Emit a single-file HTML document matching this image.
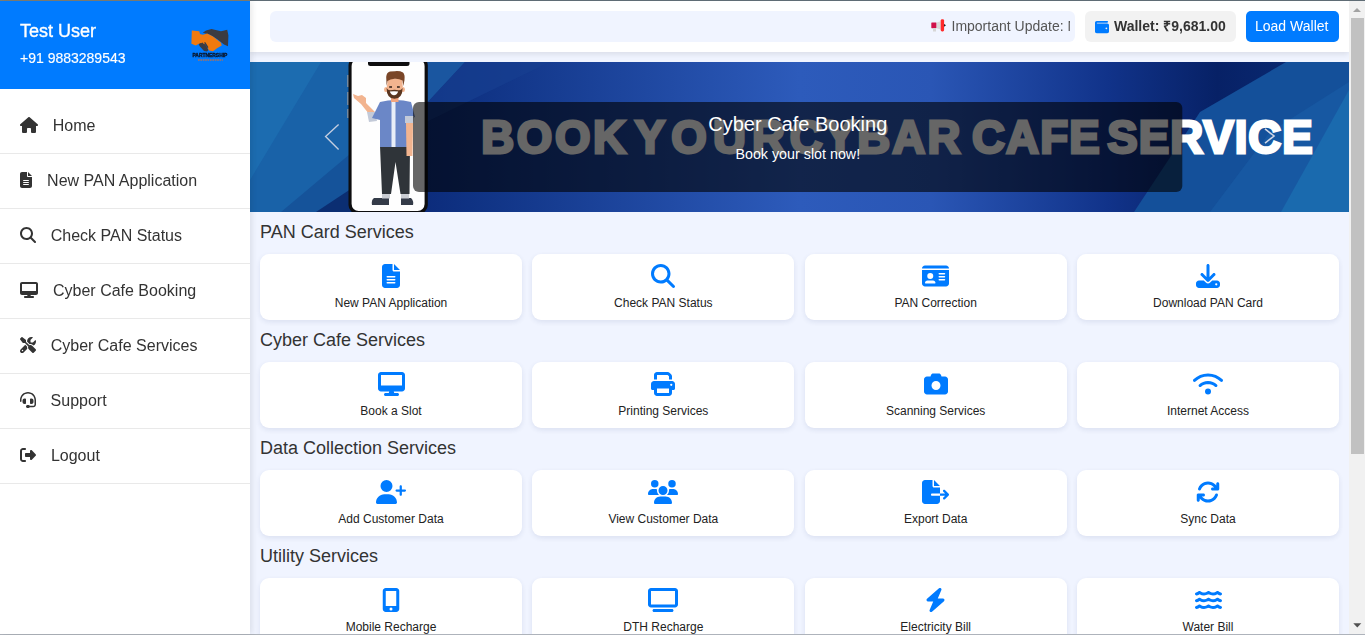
<!DOCTYPE html>
<html>
<head>
<meta charset="utf-8">
<style>
*{box-sizing:border-box;margin:0;padding:0}
html,body{width:1365px;height:635px;overflow:hidden}
body{position:relative;background:#f0f4ff;font-family:"Liberation Sans",sans-serif;color:#333}
.abs{position:absolute}
#topline{left:0;top:0;width:1365px;height:1px;background:#5f6c75}
#topline2{left:0;top:0;width:250px;height:1px;background:#7e7e74}
#botline{left:0;top:634px;width:1365px;height:1px;background:#aeb3bb}
#sidebar{left:0;top:1px;width:250px;height:633px;background:#fff;box-shadow:2px 0 6px rgba(0,0,0,0.09);z-index:5;will-change:transform}
#sbhead{left:0;top:0;width:250px;height:88px;background:#007bff;color:#fff}
#uname{left:20px;top:20px;font-size:18px;line-height:21px;white-space:nowrap;-webkit-text-stroke:0.35px #fff}
#uphone{left:20px;top:49px;font-size:14px;line-height:16px;white-space:nowrap;-webkit-text-stroke:0.15px #fff}
.mi{position:absolute;left:0;width:250px;height:55px;border-bottom:1px solid #e9e9e9}
.mi svg{position:absolute;left:20px;fill:#333}
.mi span{position:absolute;font-size:16px;line-height:18px;white-space:nowrap;color:#333}
#main{left:250px;top:1px;width:1099px;height:633px;overflow:hidden}
#hdr{left:0;top:0;width:1099px;height:51px;background:#fff;box-shadow:0 2px 6px rgba(0,0,0,0.1);z-index:3;will-change:transform}
#marq{left:20px;top:10px;width:805px;height:31px;background:#f0f4ff;border-radius:6px;overflow:hidden}
#wallet{left:835px;top:10px;width:151px;height:31px;background:#f2f2f2;border-radius:6px}
#loadbtn{left:996px;top:10px;width:93px;height:31px;background:#007bff;border-radius:5px;color:#fff;font-size:14px}
#banner{left:0;top:61px;width:1099px;height:150px;overflow:hidden}
.ttl{position:absolute;left:10px;margin-top:1px;font-size:18px;line-height:21px;color:#333;white-space:nowrap}
.card{position:absolute;width:262px;height:66px;background:#fff;border-radius:9px;box-shadow:0 2px 5px rgba(40,60,120,0.10)}
.card svg{position:absolute;top:10px;fill:#007bff}
.card span{position:absolute;left:0;width:262px;text-align:center;top:42px;font-size:12px;line-height:14px;color:#222;white-space:nowrap}
#sbar{left:1349px;top:1px;width:16px;height:633px;background:#f1f1f1}
#thumb{left:2px;top:17px;width:13px;height:436px;background:#c1c1c1}
</style>
</head>
<body>
<div id="sidebar" class="abs">
  <div id="sbhead" class="abs">
    <div id="uname" class="abs">Test User</div>
    <div id="uphone" class="abs">+91 9883289543</div>
    <svg class="abs" style="left:188px;top:23px" width="44" height="40" viewBox="188 23 44 40">
      <path d="M202.8 31.8 L206 29.4 L211.5 27.9 L221 30.2 L227.2 28.7 L228.4 34.2 L228 45.2 L224 43.6 L217 38.1 L210 33.8Z" fill="#3b3b42"/>
      <path d="M198.5 42.5 L201.5 41 L205 43 L208.5 49 L207 50.5 L204 50 L199.5 45Z" fill="#3b3b42"/>
      <path d="M191.8 29.4 L199.3 30.2 L200 33 L202.8 33.8 L207.2 32.6 L213 35.4 L221 41.7 L221.7 44.4 L217 47.2 L213 50.3 L209 49.5 L206 43.6 L200.5 42 L195.7 44.4 L191.4 42.8Z" fill="#f07a10"/>
      <path d="M201 42.2 L202.6 41.6 L206.3 47.6 L204.8 48.4Z M204 41.6 L205.4 41.2 L208.5 46.2 L207.2 47Z" fill="#3b3b42"/>
      <text x="209.9" y="55.8" text-anchor="middle" font-family="Liberation Sans" font-weight="bold" font-size="5.4" fill="#0a1426" stroke="#0a1426" stroke-width="0.35" textLength="35" lengthAdjust="spacingAndGlyphs">PARTNERSHIP</text>
      <line x1="198" y1="59" x2="222.8" y2="59" stroke="#e0702a" stroke-width="1.5" stroke-dasharray="1.6 0.8" stroke-opacity="0.8"/>
    </svg>
  </div>

  <div class="mi" style="top:98px"><svg style="top:18px" width="18" height="16" viewBox="0 0 576 512"><path d="M575.8 255.5c0 18-15 32.1-32 32.1h-32l.7 160.2c0 2.7-.2 5.4-.5 8.1V472c0 22.1-17.9 40-40 40H456c-1.1 0-2.2 0-3.3-.1c-1.4 .1-2.8 .1-4.2 .1H416 392c-22.1 0-40-17.9-40-40V448 384c0-17.7-14.3-32-32-32H256c-17.7 0-32 14.3-32 32v64 24c0 22.1-17.9 40-40 40H160 128.1c-1.5 0-3-.1-4.5-.2c-1.2 .1-2.4 .2-3.6 .2H104c-22.1 0-40-17.9-40-40V360c0-.9 0-1.9 .1-2.8V287.6H32c-18 0-32-14-32-32.1c0-9 3-17 10-24L266.4 8c7-7 15-8 22-8s15 2 21 7L564.8 231.5c8 7 12 15 11 24z"/></svg><span style="left:52.7px;top:18px">Home</span></div>
  <div class="mi" style="top:153px"><svg style="top:18px" width="12" height="16" viewBox="0 0 384 512"><path d="M64 0C28.7 0 0 28.7 0 64V448c0 35.3 28.7 64 64 64H320c35.3 0 64-28.7 64-64V160H256c-17.7 0-32-14.3-32-32V0H64zM256 0V128H384L256 0zM112 256H272c8.8 0 16 7.2 16 16s-7.2 16-16 16H112c-8.8 0-16-7.2-16-16s7.2-16 16-16zm0 64H272c8.8 0 16 7.2 16 16s-7.2 16-16 16H112c-8.8 0-16-7.2-16-16s7.2-16 16-16zm0 64H272c8.8 0 16 7.2 16 16s-7.2 16-16 16H112c-8.8 0-16-7.2-16-16s7.2-16 16-16z"/></svg><span style="left:47.1px;top:18px">New PAN Application</span></div>
  <div class="mi" style="top:208px"><svg style="top:18px" width="16" height="16" viewBox="0 0 512 512"><path d="M416 208c0 45.9-14.9 88.3-40 122.7L502.6 457.4c12.5 12.5 12.5 32.8 0 45.3s-32.8 12.5-45.3 0L330.7 376c-34.4 25.2-76.8 40-122.7 40C93.1 416 0 322.9 0 208S93.1 0 208 0S416 93.1 416 208zM208 352a144 144 0 1 0 0-288 144 144 0 1 0 0 288z"/></svg><span style="left:50.7px;top:18px">Check PAN Status</span></div>
  <div class="mi" style="top:263px"><svg style="top:18px" width="18" height="16" viewBox="0 0 576 512"><path d="M64 0C28.7 0 0 28.7 0 64V352c0 35.3 28.7 64 64 64H240l-10.7 32H160c-17.7 0-32 14.3-32 32s14.3 32 32 32H416c17.7 0 32-14.3 32-32s-14.3-32-32-32H346.7L336 416H512c35.3 0 64-28.7 64-64V64c0-35.3-28.7-64-64-64H64zM512 64V288H64V64H512z"/></svg><span style="left:53px;top:18px">Cyber Cafe Booking</span></div>
  <div class="mi" style="top:318px"><svg style="top:18px" width="16" height="16" viewBox="0 0 512 512"><path d="M78.6 5C69.1-2.4 55.6-1.5 47 7L7 47c-8.5 8.5-9.4 22-2.1 31.6l80 104c4.5 5.9 11.6 9.4 19 9.4h54.1l109 109c-14.700 29-10 65.4 14.3 89.6l112 112c12.5 12.5 32.8 12.5 45.3 0l64-64c12.5-12.5 12.5-32.8 0-45.3l-112-112c-24.2-24.2-60.6-29-89.6-14.3l-109-109V104c0-7.5-3.5-14.5-9.4-19L78.6 5zM19.9 396.1C7.2 408.8 0 426.1 0 444.1C0 481.6 30.4 512 67.9 512c18 0 35.3-7.2 48-19.9L233.7 374.3c-7.8-20.9-9-43.6-3.6-65.1l-61.7-61.7L19.9 396.1zM512 144c0-10.5-1.1-20.7-3.1-30.5c-2.4-11.2-16.1-14.1-24.2-6l-63.9 63.9c-3 3-7.1 4.7-11.3 4.7H352c-8.8 0-16-7.2-16-16V102.6c0-4.2 1.7-8.3 4.7-11.3l63.9-63.9c8.1-8.1 5.2-21.8-6-24.2C388.7 1.1 378.5 0 368 0C288.5 0 224 64.5 224 144l0 .8 85.3 85.3c36-9.1 75.8 .5 104 28.7L429 274.5c49-23 83-72.8 83-130.5zM56 432a24 24 0 1 1 48 0 24 24 0 1 1 -48 0z"/></svg><span style="left:50.7px;top:18px">Cyber Cafe Services</span></div>
  <div class="mi" style="top:373px"><svg style="top:18px" width="16" height="16" viewBox="0 0 512 512"><path d="M256 48C141.1 48 48 141.1 48 256v40c0 13.3-10.7 24-24 24s-24-10.7-24-24V256C0 114.6 114.6 0 256 0S512 114.6 512 256V400.1c0 48.6-39.4 88-88.1 88L313.6 488c-8.3 14.3-23.8 24-41.6 24H240c-26.5 0-48-21.5-48-48s21.5-48 48-48h32c17.8 0 33.3 9.7 41.6 24l110.4 .1c22.1 0 40-17.900 40-40V256c0-114.9-93.1-208-208-208zM144 208h16c17.7 0 32 14.3 32 32V352c0 17.7-14.3 32-32 32H144c-35.3 0-64-28.7-64-64V272c0-35.3 28.7-64 64-64zm224 0c35.3 0 64 28.7 64 64v48c0 35.3-28.7 64-64 64H352c-17.7 0-32-14.3-32-32V240c0-17.7 14.3-32 32-32h16z"/></svg><span style="left:50.6px;top:18px">Support</span></div>
  <div class="mi" style="top:428px"><svg style="top:18px" width="16" height="16" viewBox="0 0 512 512"><path d="M377.9 105.9L500.7 228.7c7.2 7.2 11.3 17.1 11.3 27.3s-4.1 20.1-11.3 27.3L377.9 406.1c-6.4 6.4-15 9.9-24 9.9c-18.7 0-33.9-15.2-33.9-33.9l0-62.1-128 0c-17.7 0-32-14.3-32-32l0-64c0-17.7 14.3-32 32-32l128 0 0-62.1c0-18.7 15.2-33.9 33.9-33.9c9 0 17.6 3.6 24 9.9zM160 96L96 96c-17.7 0-32 14.3-32 32l0 256c0 17.7 14.3 32 32 32l64 0c17.7 0 32 14.3 32 32s-14.3 32-32 32l-64 0c-53 0-96-43-96-96L0 128C0 75 43 32 96 32l64 0c17.7 0 32 14.3 32 32s-14.3 32-32 32z"/></svg><span style="left:50.9px;top:18px">Logout</span></div>
</div>
<div id="main" class="abs">
  <div id="hdr" class="abs">
    <div id="marq" class="abs"><div class="abs" style="left:0;top:0;width:800px;height:31px;overflow:hidden">
      <svg class="abs" style="left:660.1px;top:8.1px" width="16" height="14" viewBox="0 0 16 14"><rect x="1.3" y="3.4" width="5.3" height="5.8" rx="0.6" fill="#d0104a"/><rect x="3" y="9" width="3" height="3.5" fill="#d6d6d6"/><polygon points="6.6,3.6 10.7,2.2 10.7,10.6 6.6,9.2" fill="#d9d9d9"/><rect x="10.7" y="0.2" width="3.4" height="12.3" rx="1.4" fill="#ff2a2a"/><polygon points="14,5 16,6.3 14,7.8" fill="#222"/></svg>
      <div class="abs" style="left:681.5px;top:7px;font-size:14px;line-height:16px;color:#555;white-space:nowrap">Important Update: New PAN services are now available</div>
    </div></div>
    <div id="wallet" class="abs">
      <svg class="abs" style="left:10px;top:8.8px" width="14" height="14" viewBox="0 0 512 512"><path fill="#007bff" d="M64 32C28.7 32 0 60.7 0 96V416c0 35.3 28.7 64 64 64H448c35.3 0 64-28.7 64-64V192c0-35.3-28.7-64-64-64H80c-8.8 0-16-7.2-16-16s7.2-16 16-16H448c17.7 0 32-14.3 32-32s-14.3-32-32-32H64zM416 272a32 32 0 1 1 0 64 32 32 0 1 1 0-64z"/></svg>
      <div class="abs" style="left:29px;top:7px;font-size:14px;line-height:16px;font-weight:bold;color:#333;white-space:nowrap">Wallet: ₹9,681.00</div>
    </div>
    <div id="loadbtn" class="abs"><div class="abs" style="left:9px;top:7px;line-height:16px;white-space:nowrap">Load Wallet</div></div>
  </div>
  <div id="banner" class="abs"><svg width="1099" height="150" viewBox="0 0 1099 150" style="display:block">
    <defs>
      <linearGradient id="bg" x1="0" y1="0" x2="1" y2="0">
        <stop offset="0" stop-color="#1b6aad"/>
        <stop offset="0.16" stop-color="#0c2c7c"/>
        <stop offset="0.2" stop-color="#0f3283"/>
        <stop offset="0.5" stop-color="#2d5bbb"/>
        <stop offset="0.62" stop-color="#2a56b5"/>
        <stop offset="0.78" stop-color="#11338a"/>
        <stop offset="0.88" stop-color="#072166"/>
        <stop offset="1" stop-color="#0b2e78"/>
      </linearGradient>
    </defs>
    <rect width="1099" height="150" fill="url(#bg)"/>
    <polygon points="0,0 120,0 100,150 0,150" fill="#1c6cb0"/>
    <polygon points="0,118 71,0 130,0 110,150 0,150" fill="#1962a8"/>
    <polygon points="31,150 100,92 150,60 150,150" fill="#15539a"/>
    <polygon points="66,150 100,127.6 150,100 150,150" fill="#0b2e72"/>
    <polygon points="170,0 215,0 176,42 170,50" fill="#1a56a0"/><polygon points="215,0 300,0 176,60 176,42" fill="#173f90" fill-opacity="0.7"/>
    <polygon points="884,150 950,50 1036,0 1099,0 1099,150" fill="#14509a"/>
    <polygon points="960,150 1020,70 1099,20 1099,150" fill="#1758a2"/>
    <polygon points="1031,150 1099,28 1099,150" fill="#1a6aae"/>
    <!-- phone -->
    <rect x="97.2" y="13" width="1.6" height="12" fill="#8a939e"/>
    <rect x="97.2" y="30" width="1.6" height="13" fill="#8a939e"/>
    <rect x="97.2" y="47" width="1.6" height="9" fill="#8a939e"/>
    <rect x="98.5" y="-5.5" width="79.3" height="157.5" rx="9" fill="#0d0d0f"/>
    <rect x="101.6" y="-3" width="73" height="152" rx="7" fill="#fefefe"/>
    <rect x="118" y="-2" width="41.5" height="6" rx="2.5" fill="#0d0d0f"/>
    <!-- man -->
    <g>
      <path d="M124 136 L139 136 L139 143 L122 143 Q121 138 124 136Z" fill="#343b48"/>
      <path d="M151 136 L161 136 Q164 139 163 143 L151 143Z" fill="#343b48"/>
      <rect x="132" y="130.5" width="8" height="6" fill="#c9ccd2"/>
      <rect x="151" y="130.5" width="8" height="6" fill="#c9ccd2"/>
      <path d="M130 84 L160 84 L159.5 132 L150.5 132 L145.5 100 L141 132 L132 132Z" fill="#2f3439"/>
      <path d="M119 52 L111 42 L104 36 L103 32 L108 34 L112 33 L116 36 L116 41 L125 50Z" fill="#f2b48f"/>
      <path d="M117 50 L125 50 L127 59 L119 60Z" fill="#c3cad8"/>
      <path d="M130 40 Q146 36 161 40 L165 55 L160 57 L160 85 L130 85 L130 58 L122 56Z" fill="#6b87c7"/>
      <rect x="141.5" y="38" width="4" height="47" fill="#e9eef7"/>
      <path d="M155 54 L164 54 L163 61 L155 61Z" fill="#c3cad8"/>
      <path d="M156 61 L163 61 L162.5 94 L156.5 94Z" fill="#f2b48f"/>
      <rect x="141" y="33" width="7.5" height="7" fill="#f2a57f"/>
      <ellipse cx="136" cy="27.5" rx="2" ry="2.6" fill="#f2b48f"/>
      <ellipse cx="153" cy="27.5" rx="2" ry="2.6" fill="#f2b48f"/>
      <ellipse cx="144.5" cy="26.5" rx="8" ry="9.3" fill="#f2b48f"/>
      <path d="M136.6 26 Q136.5 36.6 144.5 36.8 Q152.5 36.6 152.6 26 Q151 28.5 148.5 28.2 Q144.5 27.3 140.5 28.2 Q138 28.5 136.6 26Z" fill="#5a3620"/>
      <path d="M139.8 29.6 Q144.3 28.8 148.2 29.6 Q147 33.3 144 33.3 Q141 33.2 139.8 29.6Z" fill="#fff"/>
      <path d="M137.2 25 L137.6 16.5 L152.2 16.5 L152.8 25Z" fill="#f2b48f"/>
      <path d="M136.6 24 L136.2 15 Q136.5 10.5 140 9.6 L145 9.2 Q150 8.8 153 10.5 Q155.2 12.5 154.5 18 L153.3 24 L152.5 18.5 Q149 16.5 144.5 16.8 Q140 17 137.5 19Z" fill="#7a4628"/>
      <rect x="139.2" y="24.2" width="2.8" height="1.6" fill="#3a2a22"/>
      <rect x="147" y="24.2" width="2.8" height="1.6" fill="#3a2a22"/>
    </g>
    <text x="231.2" y="90.5" font-family="Liberation Sans" font-weight="bold" font-size="45.6" fill="#fff" stroke="#fff" stroke-width="2.8" stroke-linejoin="miter" textLength="144.78" lengthAdjust="spacing">BOOK</text>
    <text x="384.8" y="90.5" font-family="Liberation Sans" font-weight="bold" font-size="45.6" fill="#fff" stroke="#fff" stroke-width="2.8" stroke-linejoin="miter" textLength="150.13" lengthAdjust="spacing">YOUR</text>
    <text x="539.7" y="90.5" font-family="Liberation Sans" font-weight="bold" font-size="45.6" fill="#fff" stroke="#fff" stroke-width="2.8" stroke-linejoin="miter" textLength="170.62" lengthAdjust="spacing">CYBAR</text>
    <text x="721.9" y="90.5" font-family="Liberation Sans" font-weight="bold" font-size="45.6" fill="#fff" stroke="#fff" stroke-width="2.8" stroke-linejoin="miter" textLength="127.86" lengthAdjust="spacing">CAFE</text>
    <text x="857.3" y="90.5" font-family="Liberation Sans" font-weight="bold" font-size="45.6" fill="#fff" stroke="#fff" stroke-width="2.8" stroke-linejoin="miter" textLength="205.41" lengthAdjust="spacing">SERVICE</text>
    <rect x="163" y="40" width="769.3" height="90" rx="6" fill="#000" fill-opacity="0.6"/>
    <text x="547.8" y="68.6" text-anchor="middle" font-family="Liberation Sans" font-size="20" fill="#fff">Cyber Cafe Booking</text>
    <text x="547.8" y="96.5" text-anchor="middle" font-family="Liberation Sans" font-size="14.3" fill="#fff">Book your slot now!</text>
    <polyline points="88.6,62.6 75.6,74.4 88.6,87.4" fill="none" stroke="#c3cde0" stroke-width="1.4"/>
    <polyline points="1015,66.8 1024,74 1015,81.2" fill="none" stroke="#cfd6e6" stroke-width="1.6"/>
  </svg></div>
  <div class="ttl" style="top:220px">PAN Card Services</div>
  <div class="card" style="left:10px;top:253px"><svg style="left:122.00px" width="18.00" height="24" viewBox="0 0 384 512"><path d="M64 0C28.7 0 0 28.7 0 64V448c0 35.3 28.7 64 64 64H320c35.3 0 64-28.7 64-64V160H256c-17.7 0-32-14.3-32-32V0H64zM256 0V128H384L256 0zM112 256H272c8.8 0 16 7.2 16 16s-7.2 16-16 16H112c-8.8 0-16-7.2-16-16s7.2-16 16-16zm0 64H272c8.8 0 16 7.2 16 16s-7.2 16-16 16H112c-8.8 0-16-7.2-16-16s7.2-16 16-16zm0 64H272c8.8 0 16 7.2 16 16s-7.2 16-16 16H112c-8.8 0-16-7.2-16-16s7.2-16 16-16z"/></svg><span>New PAN Application</span></div>
  <div class="card" style="left:282.33px;top:253px"><svg style="left:119.00px" width="24.00" height="24" viewBox="0 0 512 512"><path d="M416 208c0 45.9-14.9 88.3-40 122.7L502.6 457.4c12.5 12.5 12.5 32.8 0 45.3s-32.8 12.5-45.3 0L330.7 376c-34.4 25.2-76.8 40-122.7 40C93.1 416 0 322.9 0 208S93.1 0 208 0S416 93.1 416 208zM208 352a144 144 0 1 0 0-288 144 144 0 1 0 0 288z"/></svg><span>Check PAN Status</span></div>
  <div class="card" style="left:554.67px;top:253px"><svg style="left:117.50px" width="27.00" height="24" viewBox="0 0 576 512"><path d="M0 96l576 0c0-35.3-28.7-64-64-64H64C28.7 32 0 60.7 0 96zm0 32V416c0 35.3 28.7 64 64 64H512c35.3 0 64-28.7 64-64V128H0zM64 405.3c0-29.5 23.9-53.3 53.3-53.3H234.7c29.5 0 53.3 23.9 53.3 53.3c0 5.9-4.8 10.7-10.7 10.7H74.7c-5.9 0-10.7-4.8-10.7-10.7zM176 192a64 64 0 1 1 0 128 64 64 0 1 1 0-128zm176 16c0-8.8 7.2-16 16-16H480c8.8 0 16 7.2 16 16s-7.2 16-16 16H368c-8.8 0-16-7.2-16-16zm0 64c0-8.8 7.2-16 16-16H480c8.8 0 16 7.2 16 16s-7.2 16-16 16H368c-8.8 0-16-7.2-16-16zm0 64c0-8.8 7.2-16 16-16H480c8.8 0 16 7.2 16 16s-7.2 16-16 16H368c-8.8 0-16-7.2-16-16z"/></svg><span>PAN Correction</span></div>
  <div class="card" style="left:827px;top:253px"><svg style="left:119.00px" width="24.00" height="24" viewBox="0 0 512 512"><path d="M288 32c0-17.7-14.3-32-32-32s-32 14.3-32 32V274.7l-73.4-73.4c-12.5-12.5-32.8-12.5-45.3 0s-12.5 32.8 0 45.3l128 128c12.5 12.5 32.8 12.5 45.3 0l128-128c12.5-12.5 12.5-32.8 0-45.3s-32.8-12.5-45.3 0L288 274.7V32zM64 352c-35.3 0-64 28.7-64 64v32c0 35.3 28.7 64 64 64H448c35.3 0 64-28.7 64-64V416c0-35.3-28.7-64-64-64H346.5l-45.3 45.3c-25 25-65.5 25-90.5 0L165.5 352H64zm368 56a24 24 0 1 1 0 48 24 24 0 1 1 0-48z"/></svg><span>Download PAN Card</span></div>
  <div class="ttl" style="top:328px">Cyber Cafe Services</div>
  <div class="card" style="left:10px;top:361px"><svg style="left:117.50px" width="27.00" height="24" viewBox="0 0 576 512"><path d="M64 0C28.7 0 0 28.7 0 64V352c0 35.3 28.7 64 64 64H240l-10.7 32H160c-17.7 0-32 14.3-32 32s14.3 32 32 32H416c17.7 0 32-14.3 32-32s-14.3-32-32-32H346.7L336 416H512c35.3 0 64-28.7 64-64V64c0-35.3-28.7-64-64-64H64zM512 64V288H64V64H512z"/></svg><span>Book a Slot</span></div>
  <div class="card" style="left:282.33px;top:361px"><svg style="left:119.00px" width="24.00" height="24" viewBox="0 0 512 512"><path d="M128 0C92.7 0 64 28.7 64 64v96h64V64H354.7L384 93.3V160h64V93.3c0-17-6.7-33.3-18.7-45.3L400 18.7C388 6.7 371.7 0 354.7 0H128zM384 352v32 64H128V384 368 352H384zm64 32h32c17.7 0 32-14.3 32-32V256c0-35.3-28.7-64-64-64H64c-35.3 0-64 28.7-64 64v96c0 17.7 14.3 32 32 32H64v64c0 35.3 28.7 64 64 64H384c35.3 0 64-28.7 64-64V384zM432 248a24 24 0 1 1 0 48 24 24 0 1 1 0-48z"/></svg><span>Printing Services</span></div>
  <div class="card" style="left:554.67px;top:361px"><svg style="left:119.00px" width="24.00" height="24" viewBox="0 0 512 512"><path d="M149.1 64.8L138.7 96H64C28.7 96 0 124.7 0 160V416c0 35.3 28.7 64 64 64H448c35.3 0 64-28.7 64-64V160c0-35.3-28.7-64-64-64H373.3L362.9 64.8C356.4 45.2 338.1 32 317.4 32H194.6c-20.7 0-39 13.2-45.5 32.8zM256 192a96 96 0 1 1 0 192 96 96 0 1 1 0-192z"/></svg><span>Scanning Services</span></div>
  <div class="card" style="left:827px;top:361px"><svg style="left:116.00px" width="30.00" height="24" viewBox="0 0 640 512"><path d="M54.2 202.9C123.2 136.7 216.8 96 320 96s196.8 40.7 265.8 106.9c12.8 12.2 33 11.8 45.2-.9s11.8-33-.9-45.2C549.7 79.5 440.4 32 320 32S90.3 79.5 9.8 156.7C-2.9 169-3.3 189.2 8.9 202s32.5 13.2 45.2 .9zM320 256c56.8 0 108.6 21.1 148.2 56c13.3 11.7 33.5 10.4 45.2-2.8s10.4-33.5-2.8-45.2C459.8 219.2 393 192 320 192s-139.8 27.2-190.5 72c-13.3 11.7-14.5 31.9-2.8 45.2s31.9 14.5 45.2 2.8c39.5-34.9 91.3-56 148.2-56zm64 160a64 64 0 1 0 -128 0 64 64 0 1 0 128 0z"/></svg><span>Internet Access</span></div>
  <div class="ttl" style="top:436px">Data Collection Services</div>
  <div class="card" style="left:10px;top:469px"><svg style="left:116.00px" width="30.00" height="24" viewBox="0 0 640 512"><path d="M96 128a128 128 0 1 1 256 0A128 128 0 1 1 96 128zM0 482.3C0 383.8 79.8 304 178.3 304h91.4C368.2 304 448 383.8 448 482.3c0 16.4-13.3 29.7-29.7 29.7H29.7C13.3 512 0 498.7 0 482.3zM504 312V248H440c-13.3 0-24-10.7-24-24s10.7-24 24-24h64V136c0-13.3 10.7-24 24-24s24 10.7 24 24v64h64c13.3 0 24 10.7 24 24s-10.7 24-24 24H552v64c0 13.3-10.7 24-24 24s-24-10.7-24-24z"/></svg><span>Add Customer Data</span></div>
  <div class="card" style="left:282.33px;top:469px"><svg style="left:116.00px" width="30.00" height="24" viewBox="0 0 640 512"><path d="M144 0a80 80 0 1 1 0 160A80 80 0 1 1 144 0zM512 0a80 80 0 1 1 0 160A80 80 0 1 1 512 0zM0 298.7C0 239.8 47.8 192 106.7 192h42.7c15.9 0 31 3.5 44.6 9.7c-1.3 7.2-1.9 14.7-1.900 22.3c0 38.2 16.8 72.5 43.3 96c-.2 0-.4 0-.7 0H21.3C9.6 320 0 310.4 0 298.7zM405.3 320c-.2 0-.4 0-.7 0c26.6-23.5 43.3-57.8 43.3-96c0-7.6-.7-15-1.9-22.3c13.6-6.3 28.7-9.7 44.6-9.7h42.7C592.2 192 640 239.8 640 298.7c0 11.8-9.6 21.3-21.3 21.3H405.3zM224 224a96 96 0 1 1 192 0 96 96 0 1 1 -192 0zM128 485.3C128 411.7 187.7 352 261.3 352H378.7C452.3 352 512 411.7 512 485.3c0 14.7-11.9 26.7-26.7 26.7H154.7c-14.7 0-26.7-11.9-26.7-26.7z"/></svg><span>View Customer Data</span></div>
  <div class="card" style="left:554.67px;top:469px"><svg style="left:117.50px" width="27.00" height="24" viewBox="0 0 576 512"><path d="M0 64C0 28.7 28.7 0 64 0H224V128c0 17.7 14.3 32 32 32H384V288H216c-13.3 0-24 10.7-24 24s10.7 24 24 24H384V448c0 35.3-28.7 64-64 64H64c-35.3 0-64-28.700-64-64V64zM384 336V288H494.1l-39-39c-9.4-9.4-9.4-24.6 0-33.9s24.6-9.4 33.9 0l80 80c9.4 9.4 9.4 24.6 0 33.9l-80 80c-9.4 9.4-24.6 9.4-33.9 0s-9.4-24.6 0-33.9l39-39H384zm0-208H256V0L384 128z"/></svg><span>Export Data</span></div>
  <div class="card" style="left:827px;top:469px"><svg style="left:119.00px" width="24.00" height="24" viewBox="0 0 512 512"><path d="M105.1 202.6c7.7-21.8 20.2-42.3 37.8-59.8c62.5-62.5 163.8-62.5 226.3 0L386.3 160H352c-17.7 0-32 14.3-32 32s14.3 32 32 32H463.5c0 0 0 0 0 0h.4c17.7 0 32-14.3 32-32V80c0-17.7-14.3-32-32-32s-32 14.3-32 32v35.2L414.4 97.6c-87.5-87.5-229.3-87.5-316.8 0C73.2 122 55.6 150.7 44.8 181.4c-5.9 16.7 2.9 34.9 19.5 40.8s34.9-2.9 40.8-19.5zM39 289.3c-5 1.5-9.8 4.2-13.7 8.2c-4 4-6.7 8.8-8.1 14c-.3 1.2-.6 2.5-.8 3.8c-.3 1.7-.4 3.4-.4 5.1V432c0 17.7 14.3 32 32 32s32-14.3 32-32V396.9l17.6 17.5 0 0c87.5 87.4 229.3 87.4 316.7 0c24.4-24.4 42.1-53.1 52.9-83.700c5.9-16.7-2.9-34.9-19.5-40.8s-34.9 2.9-40.8 19.5c-7.7 21.8-20.2 42.3-37.8 59.8c-62.5 62.5-163.8 62.5-226.3 0l-.1-.1L125.6 352H160c17.7 0 32-14.3 32-32s-14.3-32-32-32H48.4c-1.6 0-3.2 .1-4.8 .3s-3.1 .5-4.600 1z"/></svg><span>Sync Data</span></div>
  <div class="ttl" style="top:544px">Utility Services</div>
  <div class="card" style="left:10px;top:577px"><svg style="left:122.00px" width="18.00" height="24" viewBox="0 0 384 512"><path d="M16 64C16 28.7 44.7 0 80 0H304c35.3 0 64 28.7 64 64V448c0 35.3-28.7 64-64 64H80c-35.3 0-64-28.7-64-64V64zM224 448a32 32 0 1 0 -64 0 32 32 0 1 0 64 0zM304 64H80V384H304V64z"/></svg><span>Mobile Recharge</span></div>
  <div class="card" style="left:282.33px;top:577px"><svg style="left:116.00px" width="30.00" height="24" viewBox="0 0 640 512"><path d="M64 64V352H576V64H64zM0 64C0 28.7 28.7 0 64 0H576c35.3 0 64 28.7 64 64V352c0 35.3-28.7 64-64 64H64c-35.3 0-64-28.7-64-64V64zM128 448H512c17.7 0 32 14.3 32 32s-14.3 32-32 32H128c-17.7 0-32-14.3-32-32s14.3-32 32-32z"/></svg><span>DTH Recharge</span></div>
  <div class="card" style="left:554.67px;top:577px"><svg style="left:120.50px" width="21.00" height="24" viewBox="0 0 448 512"><path d="M349.4 44.6c5.9-13.7 1.5-29.7-10.6-38.5s-28.6-8-39.9 1.8l-256 224c-10 8.8-13.6 22.9-8.9 35.3S50.7 288 64 288H175.5L98.6 467.4c-5.9 13.7-1.5 29.7 10.6 38.5s28.6 8 39.9-1.8l256-224c10-8.8 13.6-22.9 8.9-35.3s-18.4-20.7-31.7-20.8H272.5L349.4 44.6z"/></svg><span>Electricity Bill</span></div>
  <div class="card" style="left:827px;top:577px"><svg style="left:117.50px" width="27.00" height="24" viewBox="0 0 576 512"><path d="M269.5 69.9c11.1-7.9 25.9-7.9 37 0C329 85.4 356.5 96 384 96c26.9 0 55.4-10.8 77.4-26.1l0 0c11.9-8.5 28.1-7.8 39.2 1.7c14.4 11.9 32.5 21 50.6 25.2c17.2 4 27.9 21.2 23.9 38.4s-21.2 27.9-38.4 23.9c-24.5-5.7-44.9-16.5-58.2-25C449.5 149.7 417 160 384 160c-31.9 0-60.6-9.9-80.4-18.9c-5.8-2.7-11.1-5.3-15.6-7.7c-4.5 2.4-9.7 5.1-15.6 7.7c-19.8 9-48.5 18.9-80.4 18.9c-33 0-65.5-10.3-94.5-25.8c-13.4 8.4-33.7 19.3-58.2 25c-17.2 4-34.4-6.7-38.4-23.9s6.7-34.4 23.9-38.4C42.8 92.6 61 83.5 75.3 71.600c11.1-9.5 27.3-10.1 39.2-1.7l0 0C136.7 85.2 165.1 96 192 96c27.5 0 55-10.6 77.5-26.1zm37 288C329 373.4 356.5 384 384 384c26.9 0 55.4-10.8 77.4-26.1l0 0c11.9-8.5 28.1-7.8 39.2 1.7c14.4 11.9 32.5 21 50.6 25.2c17.2 4 27.9 21.2 23.9 38.4s-21.2 27.9-38.4 23.9c-24.5-5.7-44.9-16.5-58.2-25C449.5 437.7 417 448 384 448c-31.9 0-60.6-9.9-80.4-18.9c-5.8-2.7-11.1-5.3-15.6-7.7c-4.5 2.4-9.7 5.1-15.6 7.7c-19.8 9-48.5 18.9-80.4 18.9c-33 0-65.5-10.3-94.5-25.8c-13.4 8.4-33.7 19.3-58.2 25c-17.2 4-34.4-6.7-38.4-23.9s6.7-34.4 23.9-38.4c18.1-4.2 36.2-13.3 50.6-25.2c11.1-9.4 27.3-10.1 39.2-1.7l0 0C136.7 373.2 165.1 384 192 384c27.5 0 55-10.6 77.5-26.1c11.1-7.9 25.9-7.9 37 0zm0-144C329 229.4 356.5 240 384 240c26.9 0 55.4-10.8 77.4-26.1l0 0c11.9-8.5 28.1-7.8 39.2 1.7c14.4 11.9 32.5 21 50.6 25.2c17.2 4 27.9 21.2 23.900 38.4s-21.2 27.9-38.4 23.9c-24.5-5.7-44.9-16.5-58.2-25C449.5 293.7 417 304 384 304c-31.9 0-60.6-9.9-80.4-18.9c-5.8-2.7-11.1-5.3-15.6-7.7c-4.5 2.4-9.7 5.1-15.6 7.7c-19.8 9-48.5 18.9-80.4 18.9c-33 0-65.5-10.3-94.5-25.8c-13.4 8.4-33.7 19.3-58.2 25c-17.2 4-34.4-6.7-38.4-23.9s6.7-34.4 23.9-38.4c18.1-4.2 36.2-13.3 50.6-25.2c11.1-9.4 27.3-10.1 39.2-1.7l0 0C136.7 229.2 165.1 240 192 240c27.5 0 55-10.6 77.5-26.1c11.1-7.9 25.9-7.9 37 0z"/></svg><span>Water Bill</span></div>
</div>
<div id="sbar" class="abs"><svg class="abs" style="left:0;top:0" width="16" height="633"><polygon points="4,11 12,11 8,7" fill="#a3a3a3"/><polygon points="4.3,622.2 12.3,622.2 8.3,626.4" fill="#505050"/></svg><div id="thumb" class="abs"></div></div>
<div id="topline" class="abs"></div>
<div id="topline2" class="abs"></div>
<div id="botline" class="abs"></div>
</body>
</html>
